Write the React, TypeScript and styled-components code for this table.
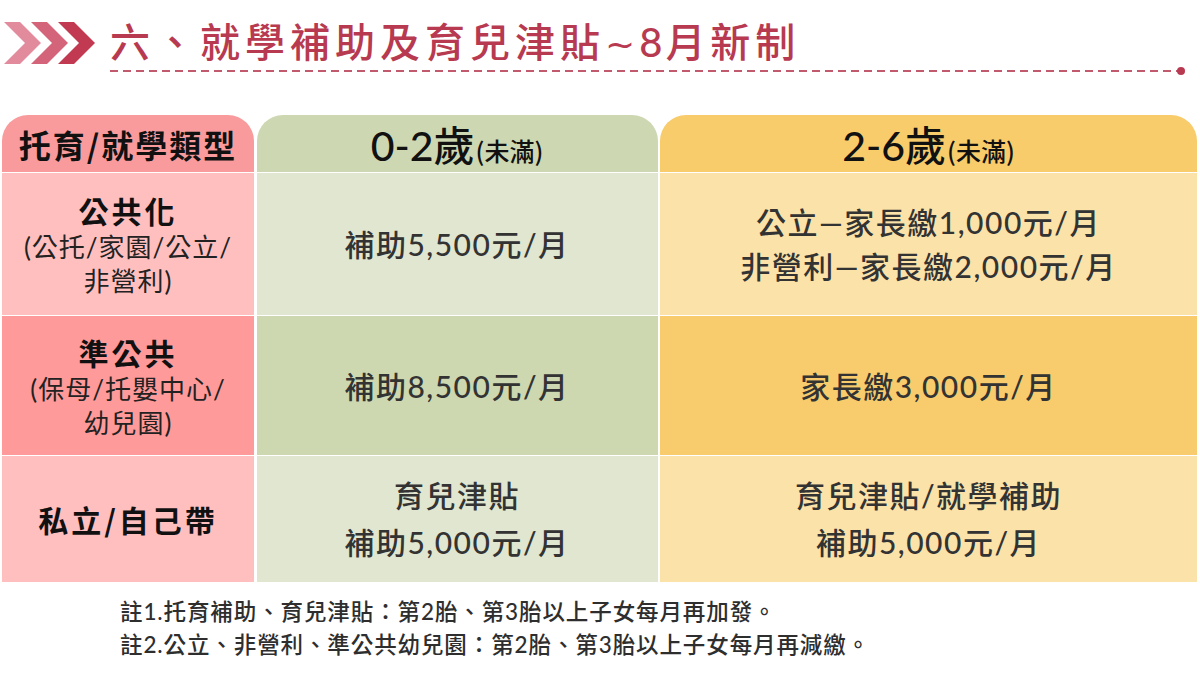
import React from "react";
import styled, { createGlobalStyle } from "styled-components";

const Global = createGlobalStyle`
  html, body { margin: 0; padding: 0; background: #ffffff; }
  body { width: 1200px; height: 675px; overflow: hidden; font-family: "Lato", "Noto Sans CJK TC", sans-serif; }
`;

const Page = styled.div`
  width: 1200px;
  height: 675px;
  display: flex;
  flex-direction: column;
  box-sizing: border-box;
`;

const TitleBar = styled.div`
  display: flex;
  align-items: flex-start;
  padding: 20px 0 0 4px;
  height: 115px;
  box-sizing: border-box;
`;

const TitleMain = styled.div`
  display: flex;
  flex-direction: column;
  margin-left: 14px;
  flex: 1;
  padding-right: 18px;
`;

const TitleText = styled.h1`
  margin: 0;
  font-family: "Noto Sans CJK TC", sans-serif;
  font-weight: 500;
  font-size: 40px;
  line-height: 40px;
  letter-spacing: 5px;
  color: #b83a50;
  white-space: nowrap;
`;

const Latin = styled.span`
  font-family: "Lato", "Noto Sans CJK TC", sans-serif;
  letter-spacing: 3px;
`;

const Tilde = styled.span`
  font-family: "DejaVu Sans", sans-serif;
  font-size: 36px;
  margin: 0 4px 0 0;
  letter-spacing: 0;
`;

const DashRule = styled.div`
  position: relative;
  margin-top: 5px;
  height: 2px;
  background: repeating-linear-gradient(90deg, #c25a6e 0 8px, transparent 8px 13px);
`;

const Dot = styled.span`
  position: absolute;
  right: -3px;
  top: -3px;
  width: 8px;
  height: 8px;
  border-radius: 50%;
  background: #b83a50;
`;

const Table = styled.div`
  display: grid;
  grid-template-columns: 252px 401px 537px;
  grid-template-rows: 57px 142px 139px 126px;
  column-gap: 2.5px;
  row-gap: 1px;
  margin: 0 0 0 2px;
  width: 1196px;
`;

type Tone = "pink" | "green" | "yellow";
const headColors: Record<Tone, string> = { pink: "#f99b9c", green: "#cdd8b3", yellow: "#f8cb6b" };
const lightColors: Record<Tone, string> = { pink: "#ffbfbf", green: "#e0e6d0", yellow: "#fbe2a9" };
const darkColors: Record<Tone, string> = { pink: "#ff9a9a", green: "#cdd8b1", yellow: "#f8cc6c" };

const HeadCell = styled.div<{ $tone: Tone }>`
  background: ${(p) => headColors[p.$tone]};
  border-radius: 26px 26px 0 0;
  display: flex;
  align-items: center;
  justify-content: center;
  color: #111;
`;

const Cell = styled.div<{ $tone: Tone; $dark?: boolean }>`
  background: ${(p) => (p.$dark ? darkColors[p.$tone] : lightColors[p.$tone])};
  display: flex;
  flex-direction: column;
  align-items: center;
  justify-content: center;
  text-align: center;
`;

const TypeHead = styled.span`
  font-family: "Noto Sans CJK TC", sans-serif;
  font-weight: 700;
  font-size: 32px;
  letter-spacing: 2px;
  line-height: 1;
`;

const AgeHead = styled.span`
  font-family: "Lato", "Noto Sans CJK TC", sans-serif;
  font-weight: 500;
  font-size: 41px;
  line-height: 1;
  color: #111;
  display: inline-flex;
  align-items: baseline;
  margin-top: 4px;
`;

const AgeNote = styled.span`
  font-family: "Noto Sans CJK TC", sans-serif;
  font-size: 25px;
  font-weight: 500;
  margin-left: 1px;
`;

const TypeName = styled.div`
  font-family: "Noto Sans CJK TC", sans-serif;
  font-weight: 700;
  font-size: 30px;
  line-height: 40px;
  letter-spacing: 3px;
  color: #111;
`;

const TypeSub = styled.div`
  font-family: "Lato", "Noto Sans CJK TC", sans-serif;
  font-size: 26px;
  line-height: 34px;
  color: #222;
  letter-spacing: 1px;
`;

const Body = styled.div<{ $gap?: number }>`
  font-family: "Lato", "Noto Sans CJK TC", sans-serif;
  font-size: 30px;
  font-weight: 500;
  line-height: ${(p) => (p.$gap ? p.$gap : 44)}px;
  letter-spacing: 1.5px;
  color: #333;
`;

const Notes = styled.div`
  padding: 13px 0 0 120px;
  font-family: "Lato", "Noto Sans CJK TC", sans-serif;
  font-size: 22.5px;
  font-weight: 500;
  line-height: 33px;
  color: #2e2e2e;
  letter-spacing: 0.9px;
`;

const Chevrons = () => (
  <svg width="92" height="46" viewBox="0 0 92 46">
    <polygon points="0,2 16,2 37,23 16,44 0,44 21,23" fill="#e28b9c" />
    <polygon points="27,2 43,2 64,23 43,44 27,44 48,23" fill="#d4647a" />
    <polygon points="54,2 70,2 91,23 70,44 54,44 75,23" fill="#c13a51" />
  </svg>
);

export default function App() {
  return (
    <Page>
      <Global />
      <TitleBar>
        <Chevrons />
        <TitleMain>
          <TitleText>
            六、就學補助及育兒津貼<Tilde>~</Tilde><Latin>8</Latin>月新制
          </TitleText>
          <DashRule>
            <Dot />
          </DashRule>
        </TitleMain>
      </TitleBar>
      <Table>
        <HeadCell $tone="pink">
          <TypeHead>托育/就學類型</TypeHead>
        </HeadCell>
        <HeadCell $tone="green">
          <AgeHead>
            0-2歲<AgeNote>(未滿)</AgeNote>
          </AgeHead>
        </HeadCell>
        <HeadCell $tone="yellow">
          <AgeHead>
            2-6歲<AgeNote>(未滿)</AgeNote>
          </AgeHead>
        </HeadCell>

        <Cell $tone="pink">
          <TypeName>公共化</TypeName>
          <TypeSub>(公托/家園/公立/</TypeSub>
          <TypeSub>非營利)</TypeSub>
        </Cell>
        <Cell $tone="green">
          <Body>補助5,500元/月</Body>
        </Cell>
        <Cell $tone="yellow">
          <Body>公立—家長繳1,000元/月</Body>
          <Body>非營利—家長繳2,000元/月</Body>
        </Cell>

        <Cell $tone="pink" $dark>
          <TypeName>準公共</TypeName>
          <TypeSub>(保母/托嬰中心/</TypeSub>
          <TypeSub>幼兒園)</TypeSub>
        </Cell>
        <Cell $tone="green" $dark>
          <Body>補助8,500元/月</Body>
        </Cell>
        <Cell $tone="yellow" $dark>
          <Body>家長繳3,000元/月</Body>
        </Cell>

        <Cell $tone="pink">
          <TypeName>私立/自己帶</TypeName>
        </Cell>
        <Cell $tone="green">
          <Body $gap={47}>育兒津貼</Body>
          <Body $gap={47}>補助5,000元/月</Body>
        </Cell>
        <Cell $tone="yellow">
          <Body $gap={47}>育兒津貼/就學補助</Body>
          <Body $gap={47}>補助5,000元/月</Body>
        </Cell>
      </Table>
      <Notes>
        <div>註1.托育補助、育兒津貼：第2胎、第3胎以上子女每月再加發。</div>
        <div>註2.公立、非營利、準公共幼兒園：第2胎、第3胎以上子女每月再減繳。</div>
      </Notes>
    </Page>
  );
}
